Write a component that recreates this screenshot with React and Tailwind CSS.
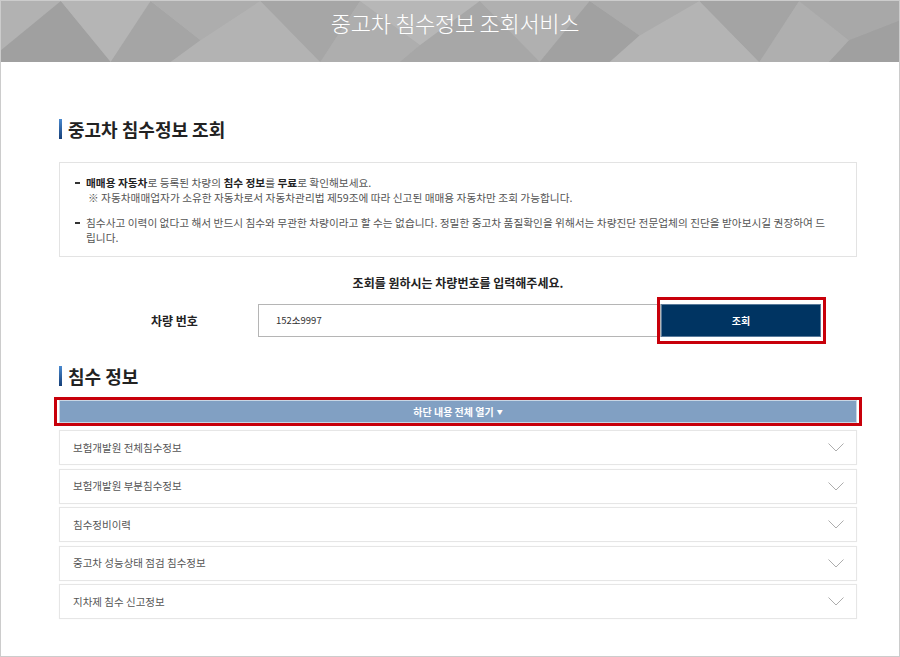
import React from "react";

const FONT = { fontFamily: '"Noto Sans CJK KR", "Noto Sans", sans-serif' };

function HeaderBg() {
  return (
    <svg className="absolute inset-0 w-full h-full" viewBox="0 0 900 62" preserveAspectRatio="none">
      <defs>
        <linearGradient id="g1" x1="0" y1="0" x2="1" y2="1">
          <stop offset="0" stopColor="#b6b6b6" />
          <stop offset="1" stopColor="#a2a2a2" />
        </linearGradient>
      </defs>
      <rect x="0" y="0" width="900" height="62" fill="url(#g1)" />
      <polygon points="0,0 60,0 0,50" fill="#b2b2b2" />
      <polygon points="0,50 60,0 110,62 0,62" fill="#a0a0a0" />
      <polygon points="60,0 150,0 110,62" fill="#b5b5b5" />
      <polygon points="150,0 200,40 170,62 110,62" fill="#a5a5a5" />
      <polygon points="150,0 260,0 200,40" fill="#adadad" />
      <polygon points="200,40 260,0 320,62 170,62" fill="#b3b3b3" />
      <polygon points="260,0 360,0 320,62" fill="#a6a6a6" />
      <polygon points="360,0 420,45 400,62 320,62" fill="#aeaeae" />
      <polygon points="360,0 480,0 420,45" fill="#b7b7b7" />
      <polygon points="420,45 480,0 540,62 400,62" fill="#a7a7a7" />
      <polygon points="480,0 590,0 540,62" fill="#b0b0b0" />
      <polygon points="590,0 640,35 610,62 540,62" fill="#a1a1a1" />
      <polygon points="590,0 700,0 640,35" fill="#ababab" />
      <polygon points="640,35 700,0 760,62 610,62" fill="#b4b4b4" />
      <polygon points="700,0 800,0 760,62" fill="#a4a4a4" />
      <polygon points="800,0 850,40 830,62 760,62" fill="#afafaf" />
      <polygon points="800,0 900,0 900,20 850,40" fill="#a8a8a8" />
      <polygon points="850,40 900,20 900,62 830,62" fill="#a0a0a0" />
    </svg>
  );
}

function SectionTitle({ children }) {
  return (
    <div className="flex items-center h-[20px]">
      <div className="w-[3px] h-[20px] bg-gradient-to-b from-[#4a8ad0] to-[#163f78]" />
      <div className="ml-[6px] text-[18px] font-semibold text-[#222] leading-none">{children}</div>
    </div>
  );
}

function Bullet() {
  return <span className="inline-block w-[5px] h-[2px] bg-[#333] align-middle mr-[6px] mb-[2px]" />;
}

function Chevron() {
  return (
    <svg width="16" height="9" viewBox="0 0 16 9" fill="none">
      <path d="M0.5 0.5 L8 8 L15.5 0.5" stroke="#adadad" strokeWidth="1" />
    </svg>
  );
}

const items = [
  "보험개발원 전체침수정보",
  "보험개발원 부분침수정보",
  "침수정비이력",
  "중고차 성능상태 점검 침수정보",
  "지차제 침수 신고정보",
];

export default function App() {
  return (
    <div style={FONT} className="w-[900px] h-[657px] border border-[#cccccc] bg-white overflow-hidden">
      <div className="relative h-[61px] flex items-center justify-center">
        <HeaderBg />
        <div className="relative pl-[10px] text-white text-[22px] font-light tracking-[-0.3px] -mt-[20px] leading-none">
          중고차 침수정보 조회서비스
        </div>
      </div>

      <div className="pl-[58px] w-[856px]">
        <div className="mt-[57px]">
          <SectionTitle>중고차 침수정보 조회</SectionTitle>
        </div>

        <div className="mt-[23px] border border-[#e3e3e3] h-[95px] pl-[15px] pr-[26px] pt-[13px] text-[10.7px] text-[#555] leading-[14.5px]">
          <div className="flex">
            <div className="w-[11px] shrink-0"><Bullet /></div>
            <div>
              <div>
                <b className="text-[#222]">매매용 자동차</b>로 등록된 차량의 <b className="text-[#222]">침수 정보</b>를{" "}
                <b className="text-[#222]">무료</b>로 확인해보세요.
              </div>
              <div className="pl-[2px] whitespace-nowrap">※ 자동차매매업자가 소유한 자동차로서 자동차관리법 제59조에 따라 신고된 매매용 자동차만 조회 가능합니다.</div>
            </div>
          </div>
          <div className="flex mt-[11px]">
            <div className="w-[11px] shrink-0"><Bullet /></div>
            <div>
              침수사고 이력이 없다고 해서 반드시 침수와 무관한 차량이라고 할 수는 없습니다. 정밀한 중고차 품질확인을 위해서는 차량진단 전문업체의 진단을 받아보시길 권장하여 드립니다.
            </div>
          </div>
        </div>

        <div className="mt-[18px] text-center text-[12px] font-bold text-[#222] leading-[16px]">
          조회를 원하시는 차량번호를 입력해주세요.
        </div>

        <div className="mt-[13px] flex items-center h-[33px]">
          <div className="w-[199px] pl-[92px] text-[12px] font-bold text-[#222]">차량 번호</div>
          <div className="w-[403px] h-[33px] border border-[#b5b5b5] flex items-center pl-[17px] text-[9.5px] text-[#333]">
            152소9997
          </div>
          <div className="relative w-[160px] h-[33px]">
            <div className="w-full h-full bg-[#003462] border border-[#5a7a9a] flex items-center justify-center text-white text-[10px] font-bold">
              조회
            </div>
            <div className="absolute -left-[4px] -right-[5px] -top-[7px] -bottom-[7px] border-[3px] border-[#c8000a]" />
          </div>
        </div>

        <div className="mt-[29px]">
          <SectionTitle>침수 정보</SectionTitle>
        </div>

        <div className="relative mt-[14px] w-[798px] h-[23px] bg-[#81a0c3] border border-[#c9d6e4] flex items-center justify-center text-white text-[10px] font-bold">
          하단 내용 전체 열기 <span className="ml-[3px] text-[6px]">▼</span>
          <div className="absolute -left-[6px] -right-[6px] -top-[4px] -bottom-[4px] border-[3px] border-[#c8000a]" />
        </div>

        <div className="mt-[7px] w-[798px] flex flex-col gap-[3.5px]">
          {items.map((t) => (
            <div key={t} className="h-[35px] border border-[#e6e6e6] shadow-[0_0_1px_rgba(0,0,0,0.06)] flex items-center justify-between pl-[13px] pr-[12px] text-[10.5px] text-[#555]">
              <span>{t}</span>
              <Chevron />
            </div>
          ))}
        </div>
      </div>
    </div>
  );
}
